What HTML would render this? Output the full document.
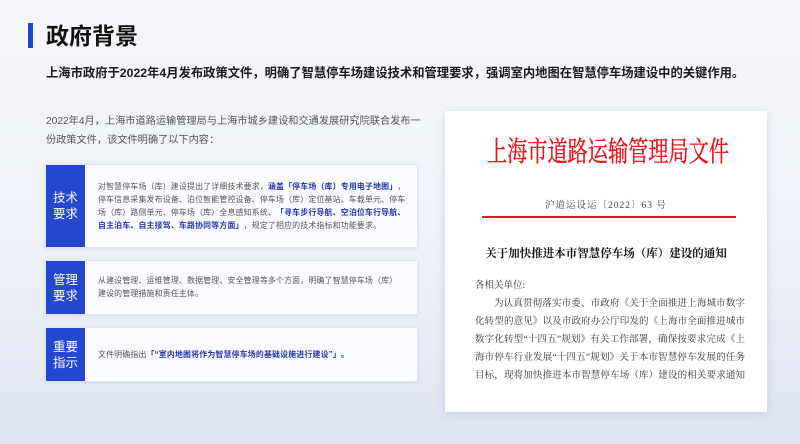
<!DOCTYPE html>
<html><head><meta charset="utf-8"><style>
*{margin:0;padding:0;box-sizing:border-box}
body{width:800px;height:444px;overflow:hidden;position:relative;font-family:"Liberation Sans","Noto Sans CJK SC",sans-serif;background:linear-gradient(180deg,#f6f7fa 0%,#eef1f7 50%,#dfe5f1 100%)}
.bar{position:absolute;left:28px;top:23px;width:5px;height:25px;background:#1f44d6}
h1{position:absolute;left:46px;top:21px;font-size:23px;font-weight:bold;color:#111;line-height:30px}
.sub{position:absolute;left:46px;top:64px;font-size:12.3px;font-weight:bold;color:#1a1a1a;white-space:nowrap;line-height:18px}
.p{position:absolute;left:46px;top:113px;font-size:10.2px;color:#555;line-height:18.5px;white-space:nowrap}
.card{position:absolute;left:45px;width:373px;background:#fafbfe;border:1px solid #dfe4ef;box-shadow:0 1px 3px rgba(80,100,160,.12)}
.tag{position:absolute;left:0;top:0;bottom:0;width:39px;background:#2447d0;color:#fff;font-size:12.5px;line-height:16px;display:flex;align-items:center;justify-content:center;text-align:center}
.tx{position:absolute;left:52px;font-size:7.9px;color:#555;line-height:13px;white-space:nowrap;letter-spacing:.2px}
.b{color:#2336b0;font-weight:bold}
.doc{position:absolute;left:445px;top:111px;width:322px;height:301px;background:#fff;box-shadow:0 2px 8px rgba(80,100,160,.2);font-family:"Liberation Serif","Noto Serif CJK SC",serif}
.dt{position:absolute;left:42px;top:26px;font-size:28px;line-height:32px;color:#e8141c;white-space:nowrap;transform:scaleX(.72);transform-origin:left;-webkit-text-stroke:.4px #e8141c}
.dn{position:absolute;left:0;right:0;top:86px;text-align:center;font-size:9.5px;color:#444;letter-spacing:1px}
.dl{position:absolute;left:37px;width:254px;top:105px;height:1.5px;background:#e8141c}
.dh{position:absolute;left:0;right:0;top:134px;text-align:center;font-size:11.5px;font-weight:bold;color:#111}
.db{position:absolute;left:30px;width:270px;top:166px;font-size:9.5px;color:#333;line-height:18px}
.db div{text-align:justify;text-align-last:justify;white-space:nowrap}
</style></head><body>
<div class="bar"></div>
<h1>政府背景</h1>
<div class="sub">上海市政府于2022年4月发布政策文件，明确了智慧停车场建设技术和管理要求，强调室内地图在智慧停车场建设中的关键作用。</div>
<div class="p">2022年4月，上海市道路运输管理局与上海市城乡建设和交通发展研究院联合发布一<br>份政策文件，该文件明确了以下内容：</div>

<div class="card" style="top:164px;height:84px"><div class="tag">技术<br>要求</div>
<div class="tx" style="top:15px">对智慧停车场（库）建设提出了详细技术要求，<span class="b">涵盖「停车场（库）专用电子地图」</span>，<br>停车信息采集发布设备、泊位智能管控设备、停车场（库）定位基站、车载单元、停车<br>场（库）路侧单元、停车场（库）全息感知系统、<span class="b">「寻车步行导航、空泊位车行导航、<br>自主泊车、自主接驾、车路协同等方面」</span>，规定了相应的技术指标和功能要求。</div></div>

<div class="card" style="top:260px;height:55px"><div class="tag">管理<br>要求</div>
<div class="tx" style="top:13px">从建设管理、运维管理、数据管理、安全管理等多个方面，明确了智慧停车场（库）<br>建设的管理措施和责任主体。</div></div>

<div class="card" style="top:327px;height:55px"><div class="tag">重要<br>指示</div>
<div class="tx" style="top:20px">文件明确指出<span class="b">「“室内地图将作为智慧停车场的基础设施进行建设”」。</span></div></div>

<div class="doc">
<div class="dt">上海市道路运输管理局文件</div>
<div class="dn">沪道运设运〔2022〕63 号</div>
<div class="dl"></div>
<div class="dh">关于加快推进本市智慧停车场（库）建设的通知</div>
<div class="db">
<div style="text-align-last:left">各相关单位:</div>
<div style="padding-left:19px">为认真贯彻落实市委、市政府《关于全面推进上海城市数字</div>
<div>化转型的意见》以及市政府办公厅印发的《上海市全面推进城市</div>
<div>数字化转型“十四五”规划》有关工作部署，确保按要求完成《上</div>
<div>海市停车行业发展“十四五”规划》关于本市智慧停车发展的任务</div>
<div>目标，现将加快推进本市智慧停车场（库）建设的相关要求通知</div>
</div>
</div>
</body></html>
